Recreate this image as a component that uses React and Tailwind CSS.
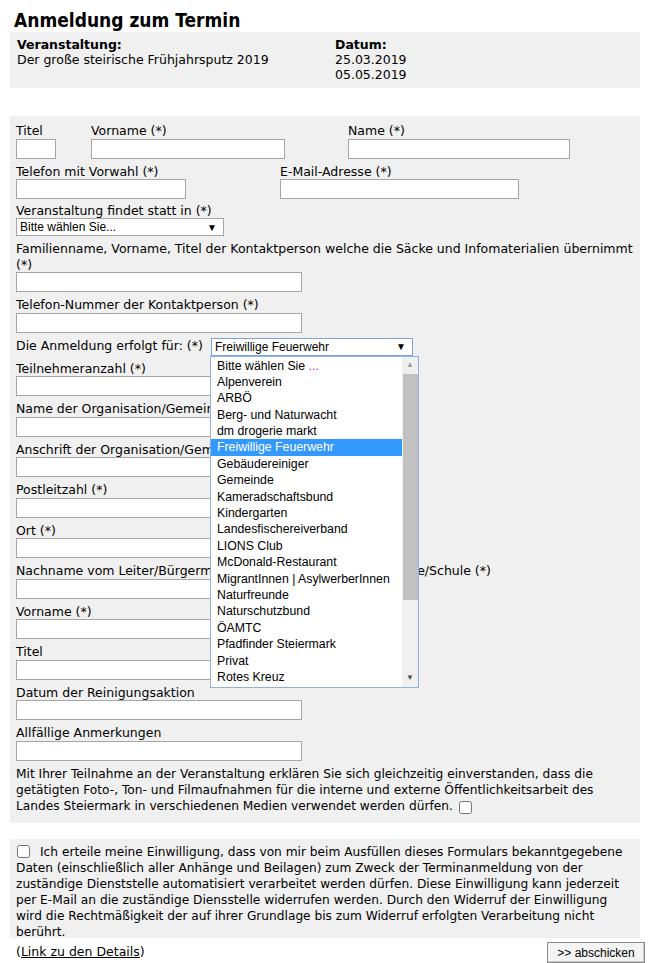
import React from "react";

const body = { fontFamily: '"DejaVu Sans", Verdana, sans-serif' };
const arial = { fontFamily: '"Liberation Sans", Arial, sans-serif' };

const options = [
  "Bitte wählen Sie ...", "Alpenverein", "ARBÖ", "Berg- und Naturwacht", "dm drogerie markt",
  "Freiwillige Feuerwehr", "Gebäudereiniger", "Gemeinde", "Kameradschaftsbund", "Kindergarten",
  "Landesfischereiverband", "LIONS Club", "McDonald-Restaurant", "MigrantInnen | AsylwerberInnen",
  "Naturfreunde", "Naturschutzbund", "ÖAMTC", "Pfadfinder Steiermark", "Privat", "Rotes Kreuz",
];

function Input({ className = "w-[286px]" }) {
  return <input type="text" className={`block h-[20px] border border-[#a6a6a6] bg-white ${className}`} />;
}

function Label({ children }) {
  return <div className="leading-[15.5px]">{children}</div>;
}

function Group({ label, width }) {
  return (
    <div className="mb-[5px]">
      <Label>{label}</Label>
      <Input className={width} />
    </div>
  );
}

function FakeSelect({ value, focused, className }) {
  return (
    <div
      className={`flex items-center justify-between h-[18px] bg-white pl-[3px] pr-[6px] text-[12px] ${
        focused ? "border border-[#7ea6dc]" : "border border-[#a6a6a6]"
      } ${className}`}
      style={arial}
    >
      <span>{value}</span>
      <span className="text-[10px]">▼</span>
    </div>
  );
}

function Dropdown() {
  return (
    <div
      className="absolute left-[-1px] top-[18px] z-10 w-[209px] h-[332px] border border-[#8fb2e2] bg-white flex text-[12.3px] text-black"
      style={arial}
    >
      <div className="flex-1 pt-[1px]">
        {options.map((o) => (
          <div
            key={o}
            className={`h-[16.4px] leading-[16.4px] pl-[6px] whitespace-nowrap ${
              o === "Freiwillige Feuerwehr" ? "bg-[#3399ff] text-white" : ""
            }`}
          >
            {o === "Bitte wählen Sie ..." ? (
              <>Bitte wählen Sie <span className="text-[#b040b0]">...</span></>
            ) : (
              o
            )}
          </div>
        ))}
      </div>
      <div className="w-[16px] bg-[#f0f0f0] flex flex-col items-center">
        <div className="h-[17px] flex items-center text-[8px] text-[#a0a0a0]">▲</div>
        <div className="w-[15px] h-[226px] bg-[#c1c1c1]" />
        <div className="flex-1" />
        <div className="h-[17px] flex items-center text-[8px] text-[#505050]">▼</div>
      </div>
    </div>
  );
}

export default function App() {
  return (
    <div className="w-[650px] h-[963px] bg-white text-black text-[12.5px]" style={body}>
      <h2 className="pl-[14px] pt-[9px] text-[19px] font-bold leading-[23px]" style={{ fontFamily: '"DejaVu Sans Condensed", "DejaVu Sans", sans-serif' }}>
        Anmeldung zum Termin
      </h2>

      <div className="mx-[10px] bg-[#f0f0f0] px-[7px] pt-[5px] pb-[6px] flex leading-[15px]">
        <div className="w-[318px]">
          <div className="font-bold">Veranstaltung:</div>
          <div>Der große steirische Frühjahrsputz 2019</div>
        </div>
        <div>
          <div className="font-bold">Datum:</div>
          <div>25.03.2019</div>
          <div>05.05.2019</div>
        </div>
      </div>

      <div className="mx-[10px] mt-[28px] bg-[#f0f0f0] px-[6px] pt-[7px] pb-[8px] h-[707px]">
        <div className="flex">
          <div className="w-[75px]">
            <Label>Titel</Label>
            <Input className="w-[40px]" />
          </div>
          <div className="w-[257px]">
            <Label>Vorname (*)</Label>
            <Input className="w-[194px]" />
          </div>
          <div>
            <Label>Name (*)</Label>
            <Input className="w-[222px]" />
          </div>
        </div>
        <div className="flex mt-[5px]">
          <div className="w-[264px]">
            <Label>Telefon mit Vorwahl (*)</Label>
            <Input className="w-[170px]" />
          </div>
          <div>
            <Label>E-Mail-Adresse (*)</Label>
            <Input className="w-[239px]" />
          </div>
        </div>
        <div className="mt-[5px]">
          <div className="leading-[14px]">Veranstaltung findet statt in (*)</div>
          <FakeSelect value="Bitte wählen Sie..." className="w-[208px]" />
        </div>
        <div className="mt-[5px] mb-[5px]">
          <Label>Familienname, Vorname, Titel der Kontaktperson welche die Säcke und Infomaterialien übernimmt (*)</Label>
          <Input />
        </div>
        <Group label="Telefon-Nummer der Kontaktperson (*)" width="w-[286px]" />
        <div className="flex items-center h-[18px] mb-[5px]">
          <span className="w-[195px] whitespace-nowrap">Die Anmeldung erfolgt für: (*)</span>
          <div className="relative">
            <FakeSelect value="Freiwillige Feuerwehr" focused className="w-[202px]" />
            <Dropdown />
          </div>
        </div>
        <Group label="Teilnehmeranzahl (*)" />
        <Group label="Name der Organisation/Gemeinde/Schule (*)" />
        <Group label="Anschrift der Organisation/Gemeinde/Schule (*)" />
        <Group label="Postleitzahl (*)" />
        <Group label="Ort (*)" />
        <Group label="Nachname vom Leiter/Bürgermeister der Organisation/Gemeinde/Schule (*)" />
        <Group label="Vorname (*)" />
        <Group label="Titel" />
        <Group label="Datum der Reinigungsaktion" />
        <Group label="Allfällige Anmerkungen" />
        <p className="leading-[16px] text-[12.2px]">
          Mit Ihrer Teilnahme an der Veranstaltung erklären Sie sich gleichzeitig einverstanden, dass die getätigten
          Foto-, Ton- und Filmaufnahmen für die interne und externe Öffentlichkeitsarbeit des Landes Steiermark in
          verschiedenen Medien verwendet werden dürfen.{" "}
          <input type="checkbox" className="align-middle w-[13px] h-[13px] ml-[2px] mt-[3px]" />
        </p>
      </div>

      <div className="mx-[10px] mt-[16px] bg-[#f0f0f0] pl-[6px] pr-[14px] pt-[5px] pb-[6px] leading-[16px] h-[99px] text-[12.2px]">
        <input type="checkbox" className="align-middle w-[13px] h-[13px] ml-[1px] mr-[10px] -mt-[3px]" />
        Ich erteile meine Einwilligung, dass von mir beim Ausfüllen dieses Formulars bekanntgegebene Daten
        (einschließlich aller Anhänge und Beilagen) zum Zweck der Terminanmeldung von der zuständige Dienststelle
        automatisiert verarbeitet werden dürfen. Diese Einwilligung kann jederzeit per E-Mail an die zuständige
        Diensstelle widerrufen werden. Durch den Widerruf der Einwilligung wird die Rechtmäßigkeit der auf ihrer
        Grundlage bis zum Widerruf erfolgten Verarbeitung nicht
        <br />
        berührt.
      </div>

      <div className="flex justify-between items-start px-[16px] pr-[5px] mt-[4px]">
        <div className="leading-[16px] pt-[2px]">
          (<a className="underline text-black">Link zu den Details</a>)
        </div>
        <button
          className="h-[21px] w-[98px] border border-[#8a8a8a] bg-[#f4f4f4] text-[12px] shadow-[inset_-1px_-1px_0_#c8c8c8]"
          style={arial}
        >
          &gt;&gt; abschicken
        </button>
      </div>
    </div>
  );
}
